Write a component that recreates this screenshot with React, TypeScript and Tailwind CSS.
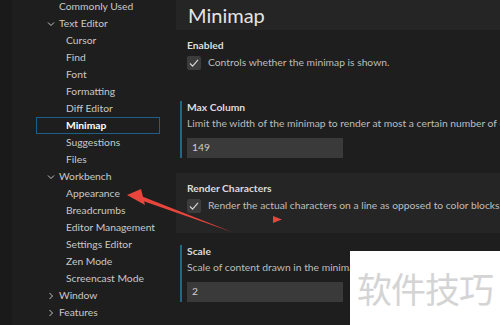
const toc: { label: string; level: 0 | 1; chevron?: "down" | "right"; selected?: boolean }[] = [
  { label: "Commonly Used", level: 0 },
  { label: "Text Editor", level: 0, chevron: "down" },
  { label: "Cursor", level: 1 },
  { label: "Find", level: 1 },
  { label: "Font", level: 1 },
  { label: "Formatting", level: 1 },
  { label: "Diff Editor", level: 1 },
  { label: "Minimap", level: 1, selected: true },
  { label: "Suggestions", level: 1 },
  { label: "Files", level: 1 },
  { label: "Workbench", level: 0, chevron: "down" },
  { label: "Appearance", level: 1 },
  { label: "Breadcrumbs", level: 1 },
  { label: "Editor Management", level: 1 },
  { label: "Settings Editor", level: 1 },
  { label: "Zen Mode", level: 1 },
  { label: "Screencast Mode", level: 1 },
  { label: "Window", level: 0, chevron: "right" },
  { label: "Features", level: 0, chevron: "right" },
];

const Chevron = ({ dir }: { dir: "down" | "right" }) => (
  <svg width="8" height="8" viewBox="0 0 8 8" className="text-[#c5c5c5]">
    {dir === "down" ? (
      <path d="M1 2.5 L4 5.5 L7 2.5" fill="none" stroke="currentColor" strokeWidth="1" />
    ) : (
      <path d="M2.5 1 L5.5 4 L2.5 7" fill="none" stroke="currentColor" strokeWidth="1" />
    )}
  </svg>
);

const Checkbox = () => (
  <div className="w-[14px] h-[14px] shrink-0 bg-[#3c3c3c] rounded-[2px] flex items-center justify-center">
    <svg width="12" height="12" viewBox="0 0 12 12">
      <path d="M2 6.5 L4.6 9.2 L10 2.8" fill="none" stroke="#d4d4d4" strokeWidth="1.2" />
    </svg>
  </div>
);

export default function App() {
  return (
    <div
      className="relative w-[500px] h-[325px] overflow-hidden bg-[#1e1e1e] flex text-[10.3px]"
      style={{ fontFamily: 'Lato, "Noto Sans", sans-serif' }}
    >
      {/* 目录 */}
      <div className="w-[165px] flex shrink-0">
        <div className="w-[12px] bg-[#1a1a1a]" />
        <div className="flex-1 flex flex-col mt-[-2px]">
          {toc.map((item) => (
            <div key={item.label} className="h-[17px] shrink-0 flex items-center whitespace-nowrap">
              {item.selected ? (
                <div className="ml-[24px] w-[124px] h-[17px] border border-[#1b5f8c] flex items-center pl-[29px] font-bold text-white">
                  {item.label}
                </div>
              ) : item.level === 0 ? (
                <div className="flex items-center text-[#c8c8c8]">
                  <span className="w-[47px] flex justify-end pr-[4px]">
                    {item.chevron && <Chevron dir={item.chevron} />}
                  </span>
                  {item.label}
                </div>
              ) : (
                <div className="pl-[54px] text-[#c8c8c8]">{item.label}</div>
              )}
            </div>
          ))}
        </div>
      </div>

      {/* 设置内容 */}
      <div className="flex-1 min-w-0 pl-[11px] flex flex-col">
        <div className="h-[30px] bg-[#252526] pl-[12px] flex items-center text-[20px] text-[#e4e4e4]">
          Minimap
        </div>

        <div className="pl-[11px]">
          <div className="mt-[8px] h-[16px] flex items-center font-bold text-[#dcdcdc]">Enabled</div>
          <div className="mt-[2px] h-[14px] flex items-center gap-[7px] text-[#bdbdbd]">
            <Checkbox />
            Controls whether the minimap is shown.
          </div>
        </div>

        <div className="mt-[31px] ml-[4px] border-l-2 border-[#1d6a86] pl-[5px] h-[57px]">
          <div className="h-[13px] flex items-center font-bold text-[#dcdcdc]">Max Column</div>
          <div className="mt-[3px] h-[14px] flex items-center text-[#bdbdbd] whitespace-nowrap">
            Limit the width of the minimap to render at most a certain number of columns.
          </div>
          <div className="mt-[7px] w-[156px] h-[20px] bg-[#3a3a3a] flex items-center pl-[5px] text-[#cfcfcf]">149</div>
        </div>

        <div className="mt-[15px] bg-[#252525] h-[60px] pl-[11px] pt-[9px]">
          <div className="h-[14px] flex items-center font-bold text-[#dcdcdc]">Render Characters</div>
          <div className="mt-[3px] h-[14px] flex items-center gap-[7px] text-[#bdbdbd] whitespace-nowrap">
            <Checkbox />
            Render the actual characters on a line as opposed to color blocks.
          </div>
        </div>

        <div className="mt-[12px] ml-[4px] border-l-2 border-[#1d6a86] pl-[5px] h-[57px]">
          <div className="h-[13px] flex items-center font-bold text-[#dcdcdc]">Scale</div>
          <div className="mt-[3px] h-[14px] flex items-center text-[#bdbdbd] whitespace-nowrap">
            Scale of content drawn in the minimap: 1, 2 or 3.
          </div>
          <div className="mt-[7px] w-[156px] h-[20px] bg-[#3a3a3a] flex items-center pl-[5px] text-[#cfcfcf]">2</div>
        </div>
      </div>

      {/* 红色箭头标注 */}
      <svg className="absolute left-0 top-0" width="500" height="325" viewBox="0 0 500 325">
        <polygon points="127,195 141,189 145,205" fill="#e8453c" />
        <polygon points="141,196 143,201 232,232" fill="#e8453c" />
        <polygon points="273,216 282,219.5 273,223" fill="#e8453c" />
      </svg>

      {/* 水印 */}
      <div className="absolute left-[350px] top-[251px] w-[150px] h-[74px] bg-white flex items-center pl-[7px]">
        <span
          className="text-[35px] text-[#d4d4d4] tracking-[-1px] whitespace-nowrap"
          style={{ fontFamily: '"Noto Sans CJK SC", sans-serif' }}
        >
          软件技巧
        </span>
      </div>
    </div>
  );
}
